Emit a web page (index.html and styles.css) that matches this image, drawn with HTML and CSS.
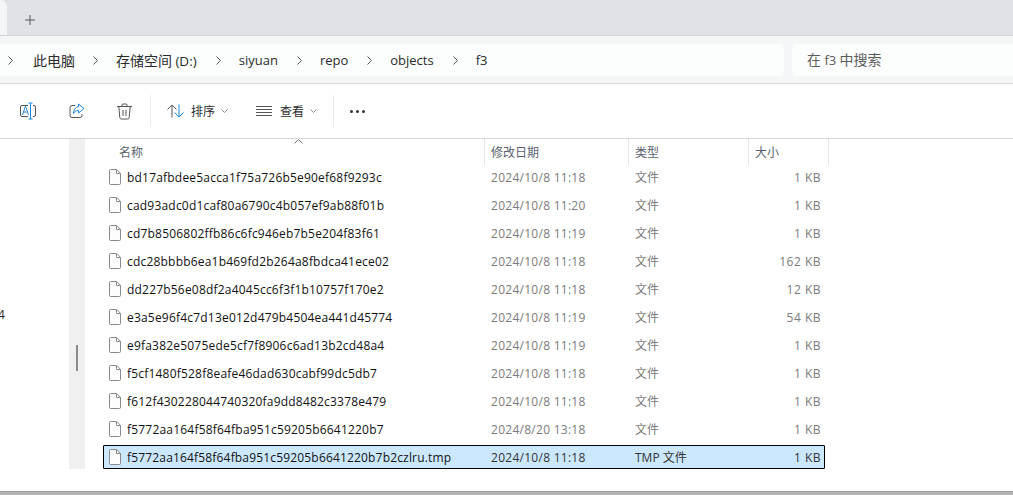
FILE: index.html
```html
<!DOCTYPE html>
<html lang="zh-CN">
<head>
<meta charset="utf-8">
<title>f3</title>
<link rel="stylesheet" href="styles.css">
</head>
<body>
<svg class="defs" width="0" height="0" aria-hidden="true">
  <symbol id="file" viewBox="0 0 12 16">
    <path d="M.5 1.5a1 1 0 0 1 1-1h6.2l3.8 3.8v10.2a1 1 0 0 1-1 1h-9a1 1 0 0 1-1-1z" fill="#fdfdfd" stroke="#8a8a8a"/>
    <path d="M7.5.7v3.8h3.800" fill="none" stroke="#8a8a8a"/>
  </symbol>
  <symbol id="chev" viewBox="0 0 7 4"><path d="M.5.5l3 3 3-3" fill="none" stroke="#8c8c8c"/></symbol>
  <symbol id="crumb" viewBox="0 0 5 9"><path d="M.5.5l4 4-4 4" fill="none" stroke="#555" stroke-width="1"/></symbol>
</svg>
<header class="tabs">
  <div class="tab-active"></div>
  <div class="tab-new">
    <svg width="10" height="10" viewBox="0 0 10 10"><path d="M5 0v10M0 5h10" stroke="#555" stroke-width="1"/></svg>
  </div>
</header>
<nav class="address">
  <div class="path">
    <svg class="crumb crumb-first"><use href="#crumb"/></svg><span class="seg seg-a"><span class="cjk">此电脑</span></span>
    <svg class="crumb"><use href="#crumb"/></svg><span class="seg"><span class="cjk">存储空间</span> <span class="drive">(D:)</span></span>
    <svg class="crumb"><use href="#crumb"/></svg><span class="seg">siyuan</span>
    <svg class="crumb"><use href="#crumb"/></svg><span class="seg">repo</span>
    <svg class="crumb"><use href="#crumb"/></svg><span class="seg">objects</span>
    <svg class="crumb"><use href="#crumb"/></svg><span class="seg">f3</span>
  </div>
  <div class="search"><span class="cjk">在</span> f3 <span class="cjk">中搜索</span></div>
</nav>
<section class="toolbar">
  <svg class="tool" width="18" height="18" viewBox="0 0 18 18" fill="none">
    <path d="M9 3.500H3a1.500 1.500 0 0 0-1.500 1.500v8A1.500 1.500 0 0 0 3 14.500h6M14 3.500h1a1.500 1.500 0 0 1 1.500 1.500v8a1.500 1.500 0 0 1-1.500 1.500h-1" stroke="#555"/>
    <path d="M3.500 13l2.800-8.500h.4L9.500 13M4.600 10h3.800" stroke="#2b86d9"/>
    <path d="M9.500 1h4M11.500 1v16M9.500 17h4" stroke="#1a86e0"/>
  </svg>
  <svg class="tool tool-share" width="16" height="16" viewBox="0 0 16 16" fill="none">
    <path d="M6 2.500H3A2 2 0 0 0 1 4.500v8A2 2 0 0 0 3 14.500h8a2 2 0 0 0 2-2v-1.500" stroke="#555"/>
    <path d="M9.500 1l5.500 4.500-5.500 4.500V7.500C7 7.500 5.500 8.500 4.500 10.500 4.500 7 6.500 4 9.500 3.500z" stroke="#1a86e0" stroke-linejoin="round"/>
  </svg>
  <svg class="tool tool-trash" width="15" height="17" viewBox="0 0 15 17" fill="none" stroke="#555">
    <path d="M0 3.500h15M5 3.500V2a1 1 0 0 1 1-1h3a1 1 0 0 1 1 1v1.500M1.800 3.500l1 11a1.500 1.500 0 0 0 1.500 1.500h6.400a1.500 1.500 0 0 0 1.500-1.500l1-11M6 7v6M9 7v6"/>
  </svg>
  <i class="divider divider-a"></i>
  <div class="action action-sort">
    <svg width="17" height="14" viewBox="0 0 17 14" fill="none">
      <path d="M5 13.500V1M.5 5.500L5 1l4.500 4.500" stroke="#555"/>
      <path d="M12 .5V13M7.500 8.500L12 13l4.500-4.500" stroke="#1a86e0"/>
    </svg>
    <span class="action-label">排序</span>
    <svg class="action-chev"><use href="#chev"/></svg>
  </div>
  <div class="action action-view">
    <svg width="16" height="10" viewBox="0 0 16 10" fill="none" stroke="#555">
      <path d="M0 .5h16M0 3.500h16M0 6.500h16M0 9.500h16"/>
    </svg>
    <span class="action-label">查看</span>
    <svg class="action-chev"><use href="#chev"/></svg>
  </div>
  <i class="divider divider-b"></i>
  <div class="more"><b></b><b></b><b></b></div>
</section>
<main class="body">
  <aside class="side"><span class="side-num">4</span></aside>
  <div class="scroll"><div class="thumb"></div></div>
  <div class="list">
    <div class="head">
      <div class="h h-name">名称<svg class="sort" width="9" height="5" viewBox="0 0 9 5"><path d="M.5 4.500l4-4 4 4" fill="none" stroke="#777"/></svg></div>
      <div class="h h-date">修改日期</div>
      <div class="h h-type">类型</div>
      <div class="h h-size">大小</div>
    </div>
    <div class="rows">
      <div class="row"><svg class="ficon"><use href="#file"/></svg><span class="name">bd17afbdee5acca1f75a726b5e90ef68f9293c</span><span class="date">2024/10/8 11:18</span><span class="type">文件</span><span class="size">1 KB</span></div>
      <div class="row"><svg class="ficon"><use href="#file"/></svg><span class="name">cad93adc0d1caf80a6790c4b057ef9ab88f01b</span><span class="date">2024/10/8 11:20</span><span class="type">文件</span><span class="size">1 KB</span></div>
      <div class="row"><svg class="ficon"><use href="#file"/></svg><span class="name">cd7b8506802ffb86c6fc946eb7b5e204f83f61</span><span class="date">2024/10/8 11:19</span><span class="type">文件</span><span class="size">1 KB</span></div>
      <div class="row"><svg class="ficon"><use href="#file"/></svg><span class="name">cdc28bbbb6ea1b469fd2b264a8fbdca41ece02</span><span class="date">2024/10/8 11:18</span><span class="type">文件</span><span class="size">162 KB</span></div>
      <div class="row"><svg class="ficon"><use href="#file"/></svg><span class="name">dd227b56e08df2a4045cc6f3f1b10757f170e2</span><span class="date">2024/10/8 11:18</span><span class="type">文件</span><span class="size">12 KB</span></div>
      <div class="row"><svg class="ficon"><use href="#file"/></svg><span class="name">e3a5e96f4c7d13e012d479b4504ea441d45774</span><span class="date">2024/10/8 11:19</span><span class="type">文件</span><span class="size">54 KB</span></div>
      <div class="row"><svg class="ficon"><use href="#file"/></svg><span class="name">e9fa382e5075ede5cf7f8906c6ad13b2cd48a4</span><span class="date">2024/10/8 11:19</span><span class="type">文件</span><span class="size">1 KB</span></div>
      <div class="row"><svg class="ficon"><use href="#file"/></svg><span class="name">f5cf1480f528f8eafe46dad630cabf99dc5db7</span><span class="date">2024/10/8 11:18</span><span class="type">文件</span><span class="size">1 KB</span></div>
      <div class="row"><svg class="ficon"><use href="#file"/></svg><span class="name">f612f430228044740320fa9dd8482c3378e479</span><span class="date">2024/10/8 11:18</span><span class="type">文件</span><span class="size">1 KB</span></div>
      <div class="row"><svg class="ficon"><use href="#file"/></svg><span class="name">f5772aa164f58f64fba951c59205b6641220b7</span><span class="date">2024/8/20 13:18</span><span class="type">文件</span><span class="size">1 KB</span></div>
      <div class="row selected"><svg class="ficon"><use href="#file"/></svg><span class="name">f5772aa164f58f64fba951c59205b6641220b7b2czlru.tmp</span><span class="date">2024/10/8 11:18</span><span class="type">TMP 文件</span><span class="size">1 KB</span></div>
    </div>
  </div>
</main>
<footer class="bottom"></footer>
</body>
</html>
```
FILE: styles.css
```css
* { box-sizing: border-box; }
html, body { margin: 0; padding: 0; }
body {
  width: 1013px; height: 495px; overflow: hidden; background: #fff;
  font-family: "Open Sans", "Noto Sans CJK SC", sans-serif;
  font-size: 12px; color: #1f1f1f;
  display: flex; flex-direction: column;
}
.defs { position: absolute; }
.cjk { font-size: 14px; }
.drive { font-size: 13.500px; }

.tabs { height: 36px; background: #dfe2e7; border-bottom: 1px solid #d2d4d8; display: flex; }
.tab-active { width: 7px; height: 35px; background: #f5f6f8; border-top-right-radius: 7px; }
.tab-new { margin-left: 18px; padding-top: 15px; line-height: 0; }

.address { height: 48px; background: #f5f6f8; border-bottom: 1px solid #dcdcdc; padding: 8px 0 7px; display: flex; gap: 8px; }
.path { width: 784px; height: 32px; background: #fcfdfd; border-radius: 0 5px 5px 0; display: flex; align-items: center; font-size: 13px; color: #2b2b2b; padding-left: 8px; }
.crumb { width: 5px; height: 9px; flex: none; margin: 0 18px 0 19px; }
.crumb-first { margin-left: 0; }
.seg { white-space: nowrap; }
.seg-a { margin-left: 2px; margin-right: -1px; }
.search { flex: 1; height: 32px; background: #fcfdfd; border-radius: 5px 0 0 5px; padding-left: 15px; line-height: 32px; font-size: 13px; color: #5c5c5c; }

.toolbar { height: 55px; background: #fff; border-bottom: 1px solid #d6d6d6; display: flex; align-items: center; padding-left: 19px; }
.tool-share { margin-left: 32px; }
.tool-trash { margin-left: 32px; }
.divider { display: block; width: 1px; height: 32px; background: #ececec; flex: none; }
.divider-a { margin-left: 18px; }
.action { display: flex; align-items: center; }
.action-sort { margin-left: 16px; }
.action-view { margin-left: 28px; }
.action-label { font-size: 12px; margin-left: 7px; color: #2b2b2b; }
.action-view .action-label { margin-left: 8px; }
.action-chev { width: 7px; height: 4px; margin-left: 6px; }
.divider-b { margin-left: 16px; }
.more { display: flex; gap: 3px; margin-left: 16px; }
.more b { width: 3px; height: 3px; border-radius: 50%; background: #333; }

.body { flex: 1; display: flex; min-height: 0; }
.side { width: 69px; position: relative; }
.side-num { position: absolute; left: -2px; top: 167px; font-size: 12px; }
.scroll { width: 16px; height: 330px; background: #f0f0f0; position: relative; }
.thumb { position: absolute; left: 7px; top: 206px; width: 2px; height: 26px; background: #8a8a8a; }
.list { flex: 1; padding-left: 18px; }
.head { height: 26px; display: flex; width: 726px; position: relative; }
.h { height: 26px; border-right: 1px solid #e4e4e4; padding: 5px 0 0 6px; color: #5a6270; font-size: 12px; line-height: 18px; position: relative; }
.h-name { width: 382px; padding-left: 16px; }
.h-date { width: 144px; }
.h-type { width: 120px; }
.h-size { width: 80px; }
.sort { position: absolute; left: 191px; top: 0; }
.rows { display: flex; flex-direction: column; gap: 4px; width: 722px; }
.row { height: 24px; display: flex; align-items: center; position: relative; border: 1px solid transparent; }
.row.selected { background: #cce8ff; border: 1px solid #000; border-radius: 1px; }
.ficon { width: 12px; height: 16px; margin-left: 5px; flex: none; }
.name { width: 364px; margin-left: 6px; white-space: nowrap; color: #111; letter-spacing: .2px; }
.selected .name { letter-spacing: .17px; }
.date { width: 144px; color: #7b7b7b; letter-spacing: .27px; }
.type { width: 120px; color: #7b7b7b; }
.size { width: 66px; text-align: right; color: #7b7b7b; letter-spacing: .5px; }
.selected .date, .selected .type, .selected .size { color: #333; }
.bottom { height: 4px; background: #b4b4b4; border-top: 1px solid #a0a0a0; }
```
